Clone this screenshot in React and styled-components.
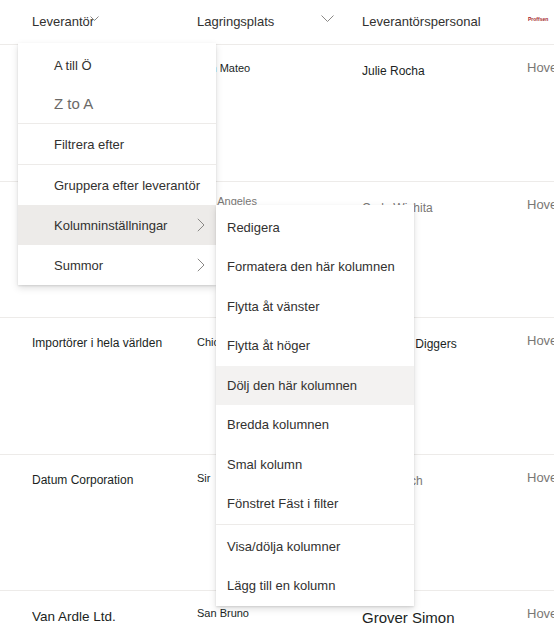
import React from "react";
import styled, { createGlobalStyle } from "styled-components";

const Global = createGlobalStyle`
  html, body { margin: 0; padding: 0; background: #fff; overflow: hidden; }
  body { font-family: "Liberation Sans", Arial, sans-serif; color: #201f1e; }
`;

const Page = styled.div`
  position: relative;
  width: 554px;
  height: 631px;
  overflow: hidden;
`;

const Grid = styled.div`
  display: grid;
  grid-template-columns: 165px 165px 165px 165px;
  padding-left: 32px;
  box-sizing: border-box;
  border-bottom: 1px solid #edebe9;
`;

const HeaderRow = styled(Grid)`
  height: 45px;
  align-items: center;
`;

const HeaderCell = styled.div`
  display: flex;
  align-items: center;
  font-size: 13px;
  color: #323130;
  white-space: nowrap;
  padding-bottom: 2px;
`;

const HeaderChevron = styled.svg`
  margin-left: ${(p) => p.$gap}px;
  margin-top: ${(p) => p.$lift}px;
  flex: none;
`;

const Tiny = styled.span`
  font-size: 5px;
  color: #a4262c;
  font-weight: bold;
  margin-left: 1px;
  margin-top: -4px;
`;

const Row = styled(Grid)`
  height: 136.5px;
  align-items: start;
`;

const Cell = styled.div`
  font-size: ${(p) => p.$size || 12}px;
  line-height: 18px;
  color: ${(p) => (p.$muted ? "#797775" : "#201f1e")};
  white-space: nowrap;
  overflow: hidden;
  padding-top: ${(p) => 16 + (p.$shift || 0)}px;
`;

const Menu = styled.div`
  position: absolute;
  left: ${(p) => p.$left}px;
  top: ${(p) => p.$top}px;
  width: 198px;
  background: #fff;
  padding-top: ${(p) => p.$padTop}px;
  box-shadow: 0 3.2px 7.2px rgba(0, 0, 0, 0.13), 0 0.6px 1.8px rgba(0, 0, 0, 0.11);
  z-index: ${(p) => p.$z};
`;

const Item = styled.div`
  display: flex;
  align-items: center;
  justify-content: space-between;
  height: ${(p) => p.$h}px;
  box-sizing: border-box;
  padding-left: ${(p) => p.$indent}px;
  padding-right: 11px;
  font-size: ${(p) => p.$size || 13}px;
  color: ${(p) => (p.$muted ? "#6b6967" : "#323130")};
  background: ${(p) => p.$bg || "transparent"};
  white-space: nowrap;
`;

const Divider = styled.div`
  height: 1px;
  background: #edebe9;
  margin-bottom: ${(p) => p.$after || 0}px;
`;

const SmallDown = ({ w, h, gap, lift }) => (
  <HeaderChevron $gap={gap} $lift={lift} width={w} height={h} viewBox={`0 0 ${w} ${h}`}>
    <path d={`M0.5 0.5 L${w / 2} ${h - 0.5} L${w - 0.5} 0.5`} fill="none" stroke="#8a8886" strokeWidth="1" />
  </HeaderChevron>
);

const RightChevron = () => (
  <svg width="8" height="14" viewBox="0 0 8 14">
    <path d="M0.8 0.8 L7 7 L0.8 13.2" fill="none" stroke="#8a8886" strokeWidth="1" />
  </svg>
);

const rows = [
  { a: "Contoso Ltd.", b: "San Mateo", c: "Julie Rocha", d: "Hovedkontor", bShift: -2 },
  { a: "Fourth Coffee", b: "Los Angeles", c: "Cody Wichita", d: "Hovedkontor", grey: true, bShift: -6 },
  { a: "Importörer i hela världen", b: "Chicago", c: "Fabrikam Diggers", d: "Hovedkontor", bShift: -1 },
  { a: "Datum Corporation", b: "Sir", c: "Jared Koch", d: "Hovedkontor", grey: true, bShift: -2 },
  { a: "Van Ardle Ltd.", b: "San Bruno", c: "Grover Simon", d: "Hovedkontor", big: true, bShift: -3 },
];

export default function App() {
  return (
    <Page>
      <Global />
      <HeaderRow>
        <HeaderCell>
          Leverantör
          <SmallDown w={9} h={5} gap={-4} lift={-5} />
        </HeaderCell>
        <HeaderCell>
          Lagringsplats
          <SmallDown w={13} h={7} gap={47} lift={-6} />
        </HeaderCell>
        <HeaderCell>Leverantörspersonal</HeaderCell>
        <HeaderCell>
          <Tiny>Proffsen</Tiny>
        </HeaderCell>
      </HeaderRow>
      {rows.map((r, i) => (
        <Row key={i}>
          <Cell $size={r.big ? 13.5 : 12} $shift={r.big ? 1 : 0}>{r.a}</Cell>
          <Cell $size={11} $shift={r.bShift} $muted={r.grey && i === 1}>{r.b}</Cell>
          <Cell $size={r.big ? 15 : 12} $shift={r.big ? 2 : 1} $muted={r.grey}>{r.c}</Cell>
          <Cell $size={13} $shift={-2} $muted>{r.d}</Cell>
        </Row>
      ))}

      <Menu $left={18} $top={43} $padTop={3} $z={2}>
        <Item $h={38.5} $indent={36}>A till Ö</Item>
        <Item $h={38.5} $indent={36} $size={15} $muted>Z to A</Item>
        <Divider />
        <Item $h={40} $indent={36}>Filtrera efter</Item>
        <Divider />
        <Item $h={40} $indent={36}>Gruppera efter leverantör</Item>
        <Item $h={40} $indent={36} $bg="#edebe9">
          Kolumninställningar
          <RightChevron />
        </Item>
        <Item $h={40} $indent={36}>
          Summor
          <RightChevron />
        </Item>
      </Menu>

      <Menu $left={216} $top={205} $padTop={2.5} $z={3}>
        <Item $h={39.5} $indent={11}>Redigera</Item>
        <Item $h={39.5} $indent={11}>Formatera den här kolumnen</Item>
        <Item $h={39.5} $indent={11}>Flytta åt vänster</Item>
        <Item $h={39.5} $indent={11}>Flytta åt höger</Item>
        <Item $h={39.5} $indent={11} $bg="#f3f2f1">Dölj den här kolumnen</Item>
        <Item $h={39.5} $indent={11}>Bredda kolumnen</Item>
        <Item $h={39.5} $indent={11}>Smal kolumn</Item>
        <Item $h={39.5} $indent={11}>Fönstret Fäst i filter</Item>
        <Divider $after={2} />
        <Item $h={39.5} $indent={11}>Visa/dölja kolumner</Item>
        <Item $h={39.5} $indent={11}>Lägg till en kolumn</Item>
      </Menu>
    </Page>
  );
}
